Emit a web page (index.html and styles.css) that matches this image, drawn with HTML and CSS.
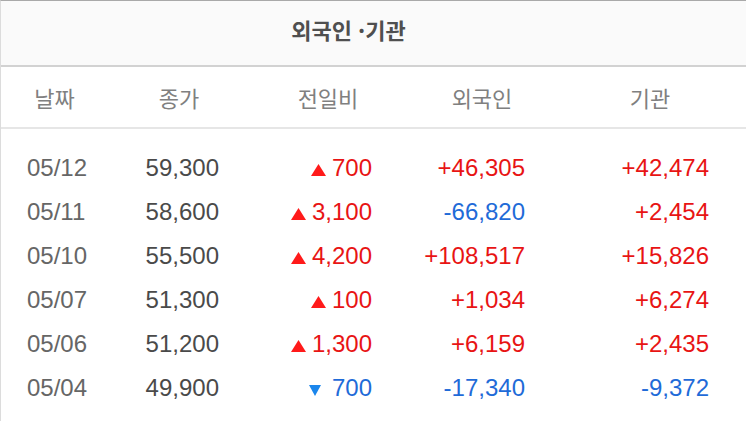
FILE: index.html
```html
<!DOCTYPE html>
<html lang="ko">
<head>
<meta charset="utf-8">
<link rel="stylesheet" href="styles.css">
</head>
<body>
<div class="wrap">
  <div class="title">외국인 ·기관</div>
  <div class="row head">
    <div class="c c1">날짜</div>
    <div class="c c2">종가</div>
    <div class="c c3">전일비</div>
    <div class="c c4">외국인</div>
    <div class="c c5">기관</div>
  </div>
  <div class="body">
    <div class="row">
      <div class="c c1 date">05/12</div>
      <div class="c c2 price">59,300</div>
      <div class="c c3 up"><svg class="tri" viewBox="0 0 15 12"><path d="M7.5 0 L15 12 L0 12 Z"/></svg>700</div>
      <div class="c c4 up">+46,305</div>
      <div class="c c5 up">+42,474</div>
    </div>
    <div class="row">
      <div class="c c1 date">05/11</div>
      <div class="c c2 price">58,600</div>
      <div class="c c3 up"><svg class="tri" viewBox="0 0 15 12"><path d="M7.5 0 L15 12 L0 12 Z"/></svg>3,100</div>
      <div class="c c4 dn">-66,820</div>
      <div class="c c5 up">+2,454</div>
    </div>
    <div class="row">
      <div class="c c1 date">05/10</div>
      <div class="c c2 price">55,500</div>
      <div class="c c3 up"><svg class="tri" viewBox="0 0 15 12"><path d="M7.5 0 L15 12 L0 12 Z"/></svg>4,200</div>
      <div class="c c4 up">+108,517</div>
      <div class="c c5 up">+15,826</div>
    </div>
    <div class="row">
      <div class="c c1 date">05/07</div>
      <div class="c c2 price">51,300</div>
      <div class="c c3 up"><svg class="tri" viewBox="0 0 15 12"><path d="M7.5 0 L15 12 L0 12 Z"/></svg>100</div>
      <div class="c c4 up">+1,034</div>
      <div class="c c5 up">+6,274</div>
    </div>
    <div class="row">
      <div class="c c1 date">05/06</div>
      <div class="c c2 price">51,200</div>
      <div class="c c3 up"><svg class="tri" viewBox="0 0 15 12"><path d="M7.5 0 L15 12 L0 12 Z"/></svg>1,300</div>
      <div class="c c4 up">+6,159</div>
      <div class="c c5 up">+2,435</div>
    </div>
    <div class="row">
      <div class="c c1 date">05/04</div>
      <div class="c c2 price">49,900</div>
      <div class="c c3 dn"><svg class="tri tri-dn" viewBox="0 0 12 11"><path d="M0 0 L12 0 L6 11 Z"/></svg>700</div>
      <div class="c c4 dn">-17,340</div>
      <div class="c c5 dn">-9,372</div>
    </div>
  </div>
</div>
</body>
</html>
```
FILE: styles.css
```css
html, body {
  margin: 0;
  padding: 0;
  background: #fff;
}
.wrap {
  width: 746px;
  height: 421px;
  box-sizing: border-box;
  border-top: 1px solid #a9a9a9;
  border-left: 1px solid #dcdcdc;
  overflow: hidden;
}
.title {
  height: 66px;
  box-sizing: border-box;
  padding-bottom: 8px;
  padding-right: 50px;
  display: flex;
  align-items: center;
  justify-content: center;
  background: #fafafa;
  border-bottom: 2px solid #d2d2d2;
  font-family: "Noto Sans CJK KR", sans-serif;
  font-weight: 700;
  font-size: 22px;
  color: #4f4f4f;
}
.row {
  display: grid;
  grid-template-columns: 107px 142px 156px 152px 184px;
  height: 44px;
  align-items: center;
}
.head {
  height: 60px;
  border-bottom: 2px solid #e6e6e6;
  font-family: "Noto Sans CJK KR", sans-serif;
  font-size: 22px;
  color: #808080;
}
.head .c {
  text-align: center;
}
.body {
  padding-top: 17px;
  font-family: "Liberation Sans", Arial, sans-serif;
  font-size: 24px;
}
.body .c {
  line-height: 44px;
  white-space: nowrap;
}
.body .c1 {
  padding-left: 26px;
}
.body .c2 {
  text-align: right;
  padding-right: 31px;
}
.body .c3 {
  text-align: right;
  padding-right: 34px;
}
.body .c4 {
  text-align: right;
  padding-right: 33px;
}
.body .c5 {
  text-align: right;
  padding-right: 33px;
}
.date {
  color: #666;
}
.price {
  color: #4a4a4a;
}
.up {
  color: #e81414;
}
.dn {
  color: #1f6bd8;
}
.tri {
  width: 15px;
  height: 12px;
  margin-right: 6px;
  vertical-align: 0px;
  fill: #ff1a1a;
}
.tri-dn {
  width: 12px;
  height: 11px;
  margin-right: 11px;
  fill: #1b86ec;
}
```
